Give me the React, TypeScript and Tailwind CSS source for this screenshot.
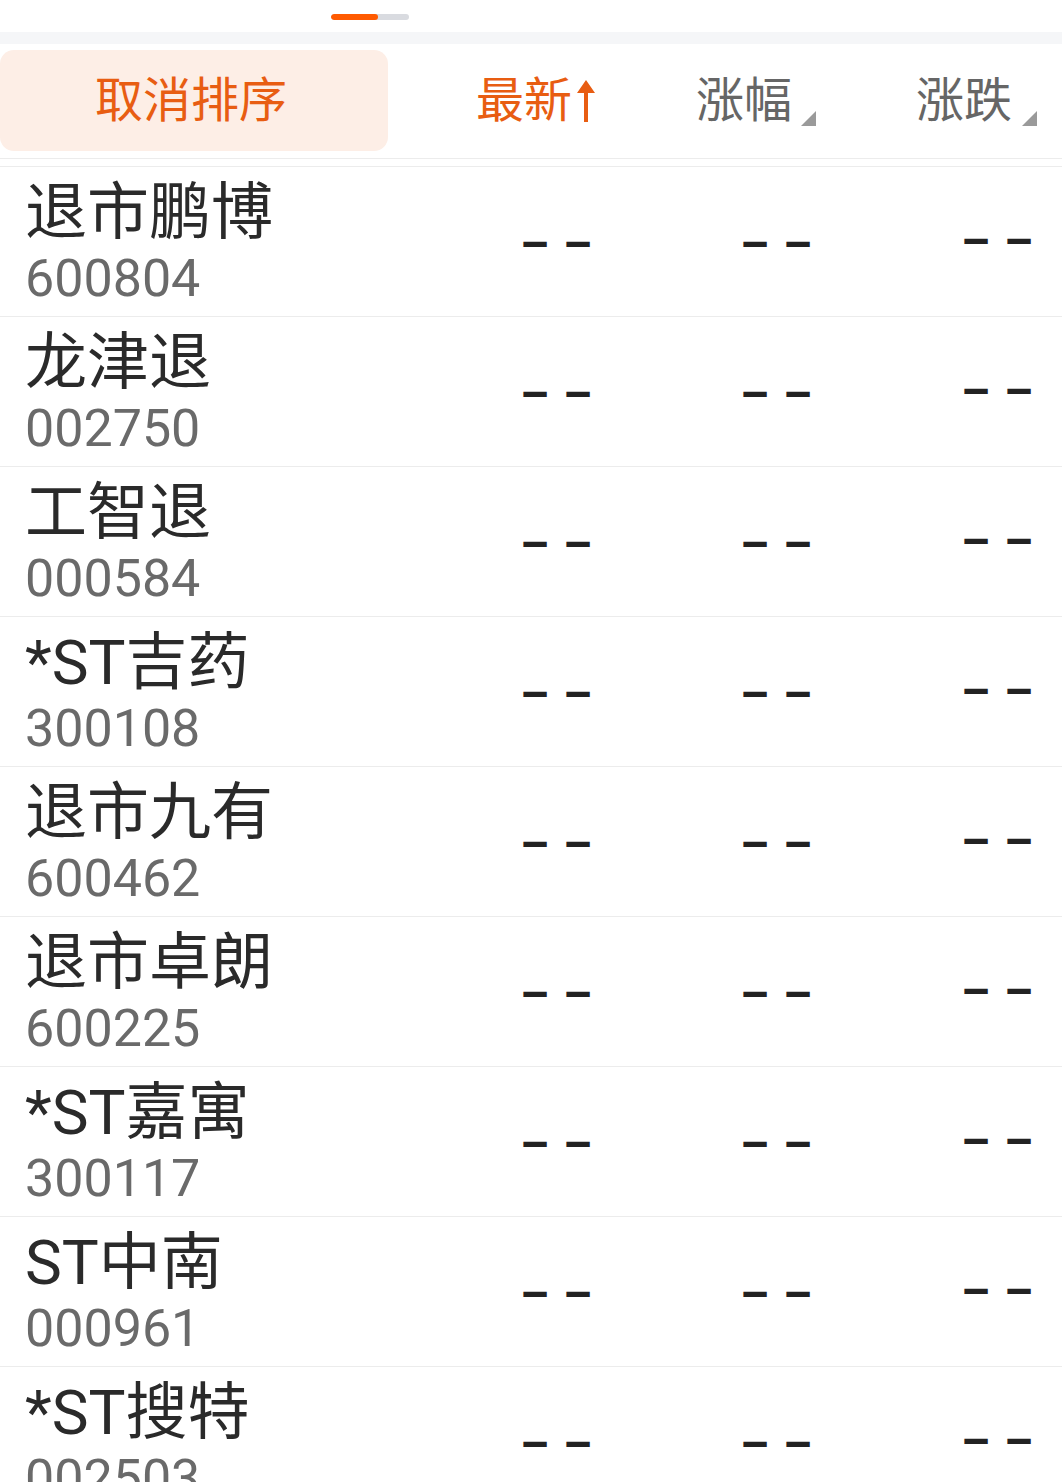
import React from "react";

const rows = [
  ["退市鹏博", "600804"],
  ["龙津退", "002750"],
  ["工智退", "000584"],
  ["*ST吉药", "300108"],
  ["退市九有", "600462"],
  ["退市卓朗", "600225"],
  ["*ST嘉寓", "300117"],
  ["ST中南", "000961"],
  ["*ST搜特", "002503"],
];

const font = { fontFamily: 'Roboto, "Noto Sans CJK SC", sans-serif' };

function Corner() {
  return (
    <svg width="15" height="15" viewBox="0 0 15 15" className="shrink-0">
      <polygon points="15,0 15,15 0,15" fill="#9a9a9a" />
    </svg>
  );
}

function Dashes() {
  return (
    <span className="mr-[-14px] text-[46px] font-bold leading-none text-[#222] tracking-[14px]">––</span>
  );
}

export default function App() {
  return (
    <div
      className="w-[1062px] h-[1482px] overflow-hidden bg-white"
      style={font}
    >
      <div className="h-[32px] pl-[331px] pt-[14px]">
        <div className="flex h-[6px] w-[78px] overflow-hidden rounded-full bg-[#d9dbe0]">
          <div className="h-full w-[47px] rounded-full bg-[#ff5a00]" />
        </div>
      </div>
      <div className="h-[12px] bg-[#f5f6f8]" />
      <div className="flex h-[115px] items-start border-b border-[#ececec]">
        <div className="mt-[6px] flex h-[101px] w-[388px] items-center justify-center rounded-[14px] bg-[#fdeee6] pr-[6px] text-[48px] leading-none text-[#e85d12]">
          取消排序
        </div>
        <div className="ml-[88px] flex h-[113px] items-center text-[48px] leading-none text-[#e85d12]">
          <span>最新</span>
          <svg width="18" height="42" viewBox="0 0 18 42" className="ml-[5px]">
            <path d="M9 0 L18 13 H11 V42 H7 V13 H0 Z" fill="#e85d12" />
          </svg>
        </div>
        <div className="ml-[101px] flex h-[113px] items-center text-[48px] leading-none text-[#666]">
          <span>涨幅</span>
          <div className="ml-[9px] mt-[36px]">
            <Corner />
          </div>
        </div>
        <div className="ml-[100px] flex h-[113px] items-center text-[48px] leading-none text-[#666]">
          <span>涨跌</span>
          <div className="ml-[10px] mt-[36px]">
            <Corner />
          </div>
        </div>
      </div>
      <div className="h-[7px]" />
      <div className="border-t border-[#ececec]">
        {rows.map(([name, code]) => (
          <div key={code} className="flex h-[150px] border-b border-[#ececec]">
            <div className="w-[420px] pl-[25px] pt-[10px]">
              <div className="text-[62px] leading-[72px] text-[#2a2a2a]">{name}</div>
              <div className="text-[52px] leading-[60px] text-[#6a6a6a]">{code}</div>
            </div>
            <div className="flex w-[172px] items-center justify-end pt-[6px]">
              <Dashes />
            </div>
            <div className="flex w-[220px] items-center justify-end pt-[6px]">
              <Dashes />
            </div>
            <div className="flex w-[221px] items-center justify-end">
              <Dashes />
            </div>
          </div>
        ))}
      </div>
    </div>
  );
}
